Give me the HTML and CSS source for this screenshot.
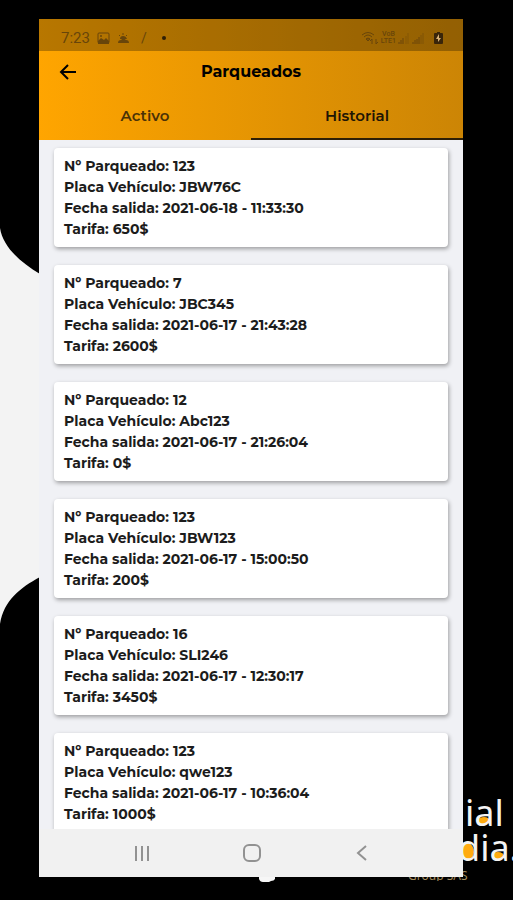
FILE: index.html
```html
<!DOCTYPE html>
<html lang="es">
<head>
    <meta charset="UTF-8">
    <meta name="viewport" content="width=device-width, initial-scale=1.0">
    <title>Parqueados</title>
    <link rel="stylesheet" href="styles.css">
</head>
<body>
    <!-- Background art -->
    <svg class="blob" viewBox="0 0 40 396" aria-hidden="true">
        <path d="M0 0C3 19 20 34 40 46V349C20 360 4 372 0 396Z" fill="#f3f3f3"/>
    </svg>
    <svg class="brand" viewBox="0 0 110 100">
        <ellipse cx="81" cy="40" rx="6" ry="4" fill="#ffab10"/>
        <ellipse cx="65" cy="71" rx="6" ry="9" fill="#ffab10"/>
        <ellipse cx="95" cy="75" rx="6" ry="4" fill="#ffab10"/>
        <text class="brand-name" x="62" y="45">ial</text>
        <text class="brand-name" x="55" y="80">dia.</text>
        <text class="brand-group" x="5" y="99">Group SAS</text>
    </svg>
    <svg class="speck" viewBox="0 0 16 12" aria-hidden="true">
        <path d="M0 0H16V3Q15 5 12 5L10 6H4Q1 6 0 3Z" fill="#f6f6f6"/>
    </svg>

    <div class="phone">
        <header class="app-header">
            <div class="status-bar">
                <div class="status-group">
                    <span class="clock">7:23</span>
                    <svg width="13" height="13" viewBox="0 0 13 13">
                        <rect x="1" y="1" width="11" height="10" rx="1" fill="none" stroke="currentColor"/>
                        <path d="M1 9L4 6L7 8L9 6L12 9V12H1Z" fill="currentColor"/>
                        <circle cx="4" cy="4" r="1" fill="currentColor"/>
                    </svg>
                    <svg width="13" height="13" viewBox="0 0 13 13">
                        <path d="M1 11Q1 8 4 8Q6 5 9 8Q12 8 12 11Z" fill="currentColor"/>
                        <path d="M3 7Q3 4 6 4Q9 4 10 7Z" fill="currentColor"/>
                        <path d="M6 1V3M2 3L3 4M10 3L9 4" fill="none" stroke="currentColor"/>
                    </svg>
                    <span class="slash">/</span>
                    <span class="dot"></span>
                </div>
                <div class="status-group right">
                    <svg width="18" height="14" viewBox="0 0 18 14">
                        <path d="M1 4Q7 -1 13 4M3 6Q7 2 11 6M5 8Q7 6 9 8" fill="none" stroke="currentColor"/>
                        <path d="M7 10L5 8H9ZM11 13V8L9 10M15 8V13L17 11" fill="none" stroke="currentColor"/>
                    </svg>
                    <span class="lte"><span>VoB</span><span>LTE1</span></span>
                    <svg width="12" height="12" viewBox="0 0 12 12">
                        <path d="M1 12V10M3 12V8M5 12V6" stroke="currentColor" stroke-width="1"/>
                        <path d="M8 12V4M10 12V1" stroke="currentColor" opacity=".4"/>
                    </svg>
                    <svg width="13" height="12" viewBox="0 0 13 12">
                        <path d="M1 12V10M3 12V8M5 12V7M7 12V5" stroke="currentColor"/>
                        <path d="M9 12V3M11 12V1" stroke="currentColor" opacity=".5"/>
                    </svg>
                    <svg class="battery" width="9" height="13" viewBox="0 0 9 13">
                        <path d="M3 0H6V1H8Q9 1 9 2V11Q9 12 8 12H1Q0 12 0 11V2Q0 1 1 1H3Z" fill="#39250a"/>
                        <path d="M5 2L2 7H4V10L7 6H5Z" fill="#d8b177"/>
                    </svg>
                </div>
            </div>
            <div class="title-bar">
                <button class="back-button" aria-label="Volver">
                    <svg width="18" height="16" viewBox="0 0 18 16">
                        <path d="M17 8H2M9 1L2 8L9 15" fill="none" stroke="currentColor" stroke-width="2"/>
                    </svg>
                </button>
                <h1 class="title">Parqueados</h1>
            </div>
            <div class="tabs" role="tablist">
                <button class="tab" role="tab" aria-selected="false">Activo</button>
                <button class="tab active" role="tab" aria-selected="true">Historial</button>
            </div>
        </header>

        <main class="list">
            <div class="card">
                <p>Nº Parqueado: 123</p>
                <p>Placa Vehículo: JBW76C</p>
                <p>Fecha salida: 2021-06-18 - 11:33:30</p>
                <p>Tarifa: 650$</p>
            </div>
            <div class="card">
                <p>Nº Parqueado: 7</p>
                <p>Placa Vehículo: JBC345</p>
                <p>Fecha salida: 2021-06-17 - 21:43:28</p>
                <p>Tarifa: 2600$</p>
            </div>
            <div class="card">
                <p>Nº Parqueado: 12</p>
                <p>Placa Vehículo: Abc123</p>
                <p>Fecha salida: 2021-06-17 - 21:26:04</p>
                <p>Tarifa: 0$</p>
            </div>
            <div class="card">
                <p>Nº Parqueado: 123</p>
                <p>Placa Vehículo: JBW123</p>
                <p>Fecha salida: 2021-06-17 - 15:00:50</p>
                <p>Tarifa: 200$</p>
            </div>
            <div class="card">
                <p>Nº Parqueado: 16</p>
                <p>Placa Vehículo: SLI246</p>
                <p>Fecha salida: 2021-06-17 - 12:30:17</p>
                <p>Tarifa: 3450$</p>
            </div>
            <div class="card">
                <p>Nº Parqueado: 123</p>
                <p>Placa Vehículo: qwe123</p>
                <p>Fecha salida: 2021-06-17 - 10:36:04</p>
                <p>Tarifa: 1000$</p>
            </div>
        </main>

        <nav class="system-nav">
            <button aria-label="Recientes">
                <svg width="18" height="18" viewBox="0 0 18 18">
                    <path d="M3 2V17M9 2V17M15 2V17" stroke="currentColor" stroke-width="2"/>
                </svg>
            </button>
            <button aria-label="Inicio">
                <svg width="18" height="18" viewBox="0 0 18 18">
                    <rect x="1" y="1" width="16" height="16" rx="5" fill="none" stroke="currentColor" stroke-width="2"/>
                </svg>
            </button>
            <button aria-label="Atrás">
                <svg width="18" height="18" viewBox="0 0 18 18">
                    <path d="M13 2L5 9L13 16" fill="none" stroke="currentColor" stroke-width="2"/>
                </svg>
            </button>
        </nav>
    </div>
</body>
</html>
```
FILE: styles.css
```css
* {
    margin: 0;
    padding: 0;
    box-sizing: border-box;
}

body {
    height: 100vh;
    padding: 19px 50px 23px 39px;
    position: relative;
    overflow: hidden;
    background-color: black;
    font-family: Montserrat, Inter, sans-serif;
    color: #1c1c1c;
}

button {
    border: none;
    background: none;
    font-family: inherit;
    color: inherit;
    cursor: pointer;
}

svg {
    display: block;
}

/* Background art */
.blob {
    position: absolute;
    left: 0;
    top: 228px;
    width: 40px;
}

.brand {
    position: absolute;
    right: 0;
    bottom: 19px;
    width: 110px;
}

.brand-name {
    font-family: "Noto Sans", sans-serif;
    font-size: 36px;
    font-weight: 400;
    fill: #f4f4f4;
}

.brand-group {
    font-family: "Noto Sans", sans-serif;
    font-size: 12px;
    fill: #a58b5c;
}

.speck {
    position: absolute;
    left: 259px;
    bottom: 12px;
    width: 16px;
}

/* Phone screen */
.phone {
    position: relative;
    height: 100%;
    display: flex;
    flex-direction: column;
    background-color: #f0f1f5;
}

.app-header {
    background: linear-gradient(to right, #ffa500, #cc8505);
}

.status-bar {
    height: 32px;
    padding: 6px 20px 0 22px;
    display: flex;
    justify-content: space-between;
    align-items: center;
    background-color: rgba(0, 0, 0, 0.28);
    color: #68450a;
}

.status-group {
    display: flex;
    align-items: center;
    gap: 7px;
}

.status-group.right {
    gap: 2px;
}

.clock {
    font-family: Roboto, sans-serif;
    font-size: 15px;
}

.slash {
    margin-left: 4px;
    font-family: Roboto, sans-serif;
    font-size: 14px;
}

.dot {
    width: 4px;
    height: 4px;
    margin-left: 8px;
    border-radius: 50%;
    background-color: #2e1f06;
}

.lte {
    display: flex;
    flex-direction: column;
    align-items: center;
    font-family: Roboto, sans-serif;
    font-size: 7px;
    font-weight: 500;
    line-height: 7px;
}

.battery {
    margin-left: 7px;
}

.title-bar {
    height: 41px;
    padding: 0 20px;
    display: grid;
    grid-template-columns: 18px 1fr 18px;
    align-items: center;
    color: black;
}

.title {
    font-size: 16px;
    font-weight: 700;
    text-align: center;
}

.tabs {
    display: flex;
}

.tab {
    flex: 1;
    height: 48px;
    border-bottom: 2px solid transparent;
    font-size: 15px;
    font-weight: 600;
    color: #4a3207;
}

.tab.active {
    border-bottom-color: #2e1f06;
    color: #201504;
}

.list {
    flex: 1;
    min-height: 0;
    padding: 8px 15px 0;
    display: flex;
    flex-direction: column;
    gap: 18px;
    overflow: hidden;
}

.card {
    flex-shrink: 0;
    padding: 8px 10px 7px;
    border-radius: 4px;
    background-color: white;
    box-shadow: 1px 2px 4px rgba(0, 0, 0, 0.35);
    font-size: 14px;
    font-weight: 700;
    line-height: 21px;
}

.system-nav {
    height: 48px;
    padding: 0 46px 0 48px;
    display: flex;
    justify-content: space-around;
    align-items: center;
    background-color: #f1f1f1;
    color: #929292;
}
```
